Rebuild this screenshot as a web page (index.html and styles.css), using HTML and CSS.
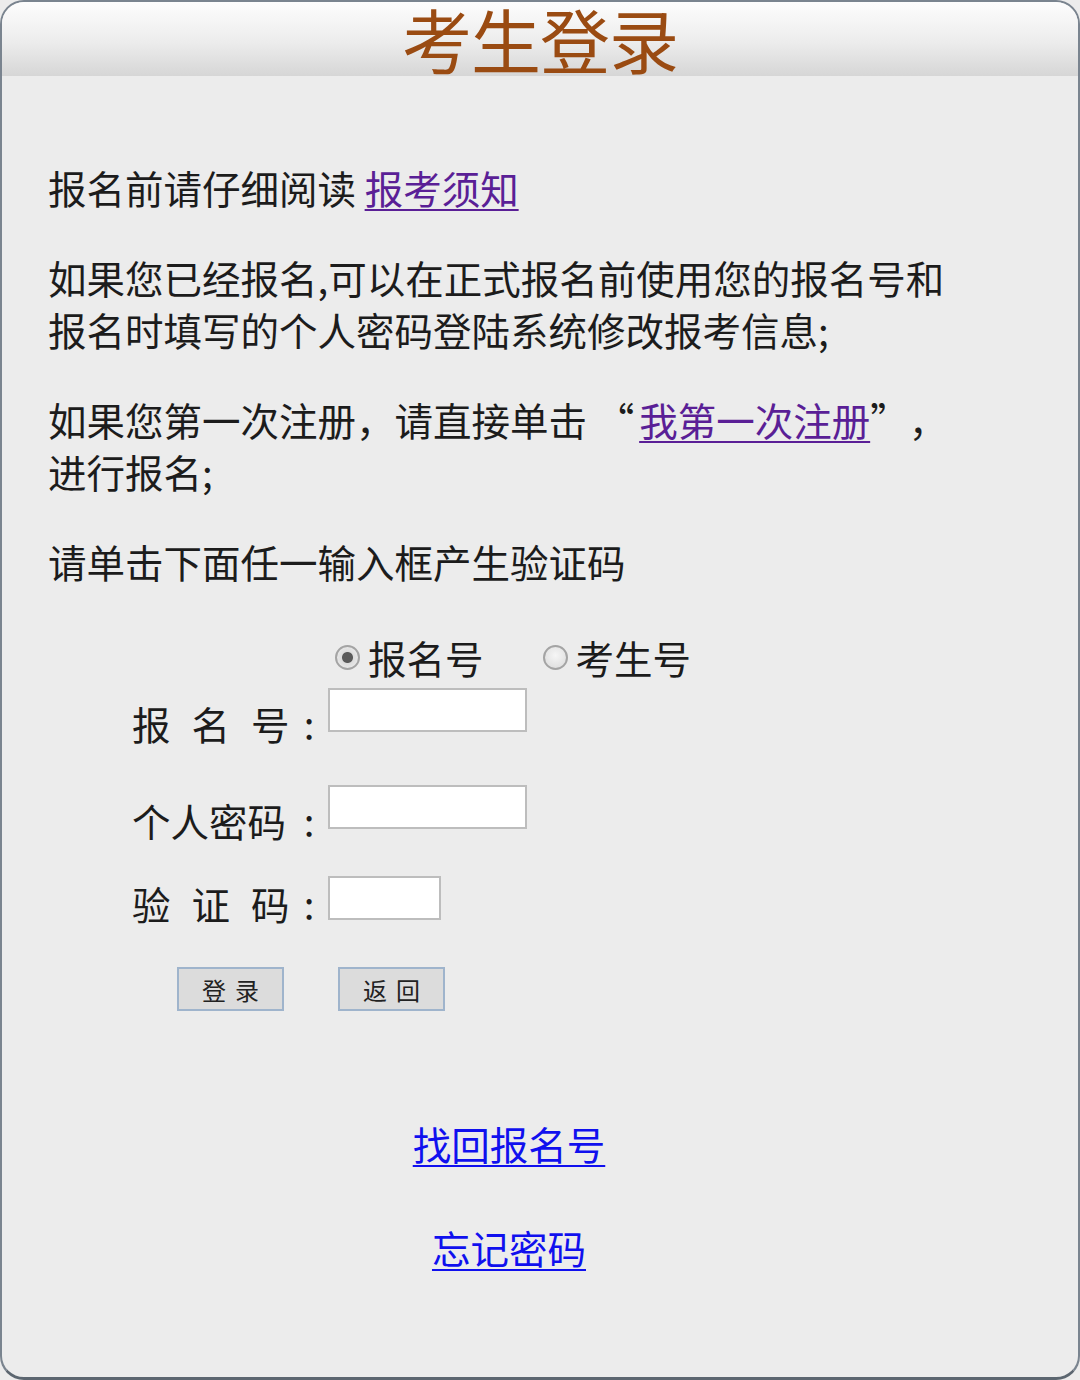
FILE: index.html
```html
<!DOCTYPE html>
<html lang="zh-CN">
<head>
<meta charset="utf-8">
<title>考生登录</title>
<link rel="stylesheet" href="styles.css">
</head>
<body>
<div class="panel">
  <div class="header"><h1 class="title">考生登录</h1></div>
  <div class="content">
    <p class="para">报名前请仔细阅读 <a class="link visited" href="#">报考须知</a></p>
    <p class="para">如果您已经报名,可以在正式报名前使用您的报名号和报名时填写的个人密码登陆系统修改报考信息;</p>
    <p class="para">如果您第一次注册，请直接单击 “<a class="link visited reg" href="#">我第一次注册</a>”，进行报名;</p>
    <p class="para">请单击下面任一输入框产生验证码</p>

    <div class="form">
      <div class="row radio-row">
        <label class="radio-item"><input class="radio" type="radio" name="t" checked><span>报名号</span></label>
        <label class="radio-item second"><input class="radio" type="radio" name="t"><span>考生号</span></label>
      </div>
      <div class="row field-row r1">
        <div class="label"><span class="lt"><span class="sp">报名</span>号</span><span class="colon">:</span></div>
        <input class="input" type="text">
      </div>
      <div class="row field-row r2">
        <div class="label"><span class="lt">个人密码</span><span class="colon">:</span></div>
        <input class="input" type="password">
      </div>
      <div class="row field-row r3">
        <div class="label"><span class="lt"><span class="sp">验证</span>码</span><span class="colon">:</span></div>
        <input class="input short" type="text">
      </div>
      <div class="row btn-row">
        <button class="btn" type="button">登录</button>
        <button class="btn" type="button">返回</button>
      </div>
    </div>

    <div class="links">
      <a class="link blue" href="#">找回报名号</a>
      <a class="link blue" href="#">忘记密码</a>
    </div>
  </div>
</div>
</body>
</html>
```

FILE: styles.css
```css
html, body {
  margin: 0;
  padding: 0;
  background: #ececec;
}

body {
  font-family: "Noto Sans CJK SC", "Noto Sans", sans-serif;
  color: #1c1c1c;
}

.panel {
  box-sizing: border-box;
  width: 1080px;
  height: 1380px;
  border: 2px solid #7a848f;
  border-bottom: 3px solid #5c6670;
  border-radius: 24px;
  overflow: hidden;
  background: #ececec;
}

.header {
  height: 74px;
  background: linear-gradient(to bottom, #fdfdfd 0%, #ececec 55%, #d6d6d6 100%);
  text-align: center;
}

.title {
  margin: 0;
  font-size: 70px;
  font-weight: normal;
  line-height: 74px;
  color: #9a4b12;
  letter-spacing: -1px;
}

.content {
  width: 922px;
  padding: 85px 0 0 46px;
}

.para {
  margin: 0 0 38px;
  font-size: 38.5px;
  line-height: 52px;
  text-spacing-trim: space-all;
}

.reg {
  margin-left: 5px;
}

.link {
  text-decoration: underline;
  text-decoration-thickness: 2px;
  text-underline-offset: 5px;
}

.visited { color: #5a1f96; }
.blue { color: #1010ee; }

.form {
  margin: 44px 0 0 84px;
  font-size: 38.5px;
}

.row {
  display: flex;
}

.radio-row {
  height: 52px;
  align-items: center;
  padding-left: 196px;
}

.radio-item {
  display: flex;
  align-items: center;
  line-height: 52px;
}

.radio-item.second {
  margin-left: 52px;
}

.radio {
  appearance: none;
  -webkit-appearance: none;
  box-sizing: border-box;
  width: 25px;
  height: 25px;
  margin: 0 8px 0 7px;
  border: 2px solid #a4a4a4;
  border-radius: 50%;
  background: radial-gradient(circle at 50% 40%, #f6f6f6 0%, #dadada 100%);
}

.radio:checked {
  background: radial-gradient(circle, #5a5a5a 0 5px, #dcdcdc 6px, #f2f2f2 100%);
}

.field-row {
  align-items: flex-end;
}

.r1 { margin-top: 5px; }
.r2 { margin-top: 36px; }
.r3 { margin-top: 30px; }

.label {
  display: flex;
  width: 196px;
  line-height: 52px;
}

.lt {
  flex: 1;
}

.sp {
  letter-spacing: 21px;
}

.colon {
  width: 38px;
  text-align: center;
}

.input {
  box-sizing: border-box;
  width: 199px;
  height: 44px;
  margin: 0 0 17px;
  border: 2px solid #bdbdbd;
  background: #fff;
  padding: 0;
}

.input.short {
  width: 113px;
  margin-bottom: 9px;
}

.btn-row {
  margin: 38px 0 0 45px;
  gap: 54px;
}

.btn {
  box-sizing: border-box;
  width: 107px;
  height: 44px;
  border: 2px solid #9fb4cc;
  background: #dcdcdc;
  font-family: "Noto Sans CJK SC", sans-serif;
  font-size: 24px;
  color: #222;
  letter-spacing: 9px;
  text-indent: 9px;
  padding: 0;
}

.links {
  margin-top: 106px;
  display: flex;
  flex-direction: column;
  align-items: center;
  font-size: 38.5px;
  line-height: 52px;
  gap: 52px;
}
```
